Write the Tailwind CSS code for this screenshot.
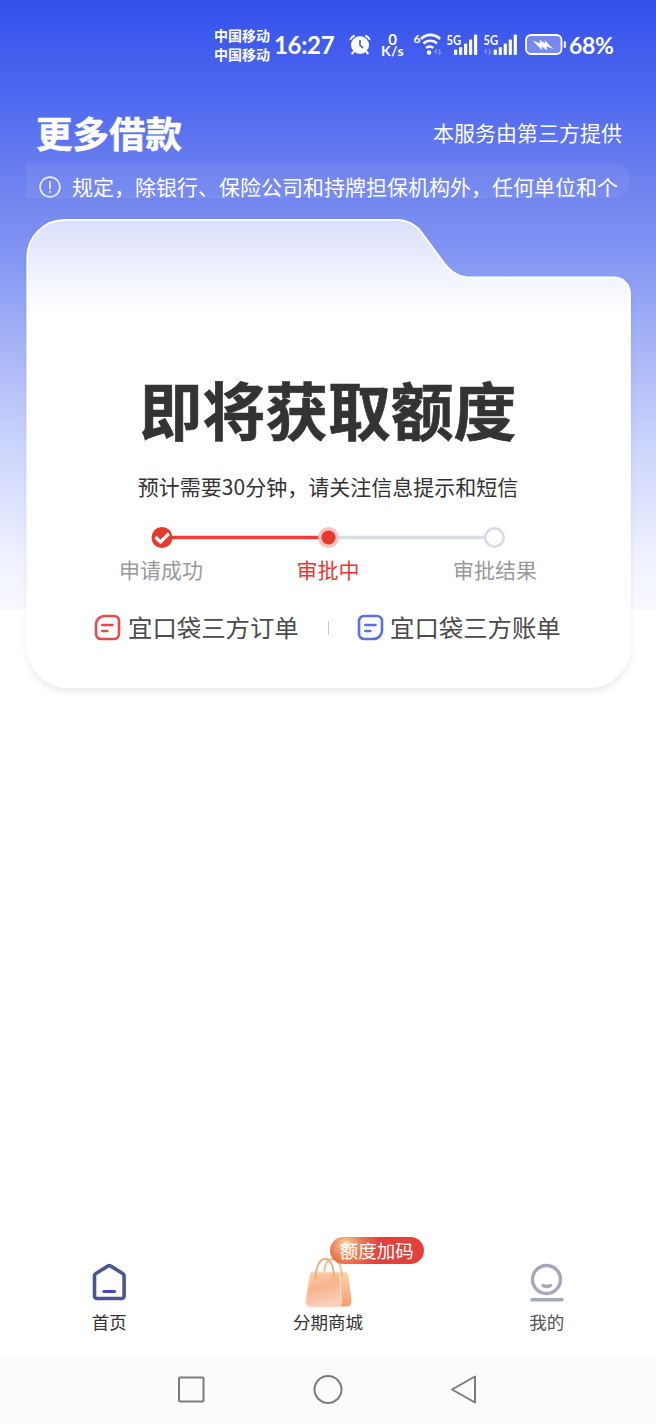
<!DOCTYPE html>
<html lang="zh-CN">
<head>
<meta charset="utf-8">
<title>更多借款</title>
<script src="https://cdn.jsdelivr.net/npm/@tailwindcss/browser@4"></script>
</head>
<body class="w-[656px] h-[1424px] overflow-hidden bg-white font-['Noto_Sans_CJK_SC',sans-serif]">
<div class="flex flex-col h-[1424px] w-[656px] bg-no-repeat bg-[size:656px_610px] bg-[linear-gradient(180deg,#3450eb_0%,#4f69ef_16%,#6b80ef_29%,#8496f2_42%,#a5b3f7_56%,#ced6fc_74%,#f0f2ff_92%,#f9faff_100%)]">

  <!-- Status bar -->
  <header class="flex h-[88px] items-start pl-[214px] pt-[26px] text-white">
    <div class="w-[56px] shrink-0 text-[14px] leading-[19px] font-bold whitespace-nowrap"><div>中国移动</div><div>中国移动</div></div>
    <div class="ml-[4px] w-[62px] shrink-0 font-['Lato'] text-[24px] leading-[38px] font-bold whitespace-nowrap tracking-[-0.3px]">16:27</div>
    <svg class="ml-[12px] mt-[7px] shrink-0" width="24" height="24" viewBox="0 0 24 24" fill="none" stroke="#fff">
      <circle cx="12" cy="12" r="9" fill="#fff" stroke="none"/>
      <path d="M2.600 6A8 8 0 0 1 6 2.800M21.400 6A8 8 0 0 0 18 2.800M5.600 18.800l-1.400 1.700M18.400 18.800l1.400 1.700" stroke-width="2" stroke-linecap="round"/>
      <path d="M12 7v5.200l3 3" stroke="#4963ee" stroke-width="1.800"/>
    </svg>
    <div class="ml-[7px] mt-[7px] w-[27px] shrink-0 text-center font-['Lato'] text-[14px] leading-[12px] font-bold"><div class="text-[15px] leading-[12px]">0</div><div class="tracking-[0.4px]">K/s</div></div>
    <svg class="ml-[7px] mt-[6px] shrink-0" width="30" height="26" viewBox="412 32 30 26" fill="none" stroke="#fff">
      <text x="412.5" y="42.5" font-family="Lato" font-size="12" font-weight="700" fill="#fff" stroke="none">6</text>
      <path d="M420 39a13 13 0 0 1 19 0M422.500 43.500a9.500 9.500 0 0 1 13.500 0M425.200 48a5 5 0 0 1 7 0" stroke-width="2.600"/>
      <circle cx="428" cy="52.500" r="2.300" fill="#fff" stroke="none"/>
      <path d="M435 54v-4l-1.500 1.500M438.500 49v5l1.500-1.500" stroke-width="1.300" opacity=".35"/>
    </svg>
    <svg class="ml-[3px] mt-[6px] shrink-0" width="75" height="26" viewBox="446 32 75 26" fill="#fff">
      <text x="446.500" y="44.500" font-family="Lato" font-size="13.500" font-weight="700" textLength="14.500" lengthAdjust="spacingAndGlyphs">5G</text>
      <text x="483.500" y="44.500" font-family="Lato" font-size="13.500" font-weight="700" textLength="14.500" lengthAdjust="spacingAndGlyphs">5G</text>
      <g id="bars"><rect x="454" y="49.500" width="3.200" height="5.500" rx="1"/><rect x="459" y="47" width="3.200" height="8" rx="1"/><rect x="464" y="43.500" width="3.200" height="11.500" rx="1"/><rect x="469" y="39.500" width="3.200" height="15.500" rx="1"/><rect x="474" y="34.500" width="3.200" height="20.500" rx="1"/></g>
      <use href="#bars" x="39.700"/>
      <path d="M486 54v-4l-1.500 1.500M489.500 49v5l1.500-1.500" fill="none" stroke="#fff" stroke-width="1.300" opacity=".35"/>
    </svg>
    <svg class="ml-[3px] mt-[6px] shrink-0" width="43" height="26" viewBox="524 32 43 26" fill="none">
      <rect x="526" y="35" width="35.500" height="19" rx="5" stroke="#fff" stroke-width="1.800" fill="#fff" fill-opacity=".28"/>
      <path d="M564.800 42v5" stroke="#fff" stroke-width="2" stroke-linecap="round"/>
      <path d="M532.500 40.500l7.500 3-.3-3.700 5.300 3.800-.2-3.500 4.700 5.200 4.500 3.800-7.500-2.500.3 3.700-5-3.700.2 3.400z" fill="#fff"/>
    </svg>
    <div class="ml-[2px] font-['Lato'] text-[23px] leading-[38px] font-bold whitespace-nowrap tracking-[-0.3px]">68%</div>
  </header>

  <!-- Page title -->
  <div class="flex h-[75px] items-center justify-between pl-[36px] pr-[34px] text-white">
    <h1 class="mt-[15px] text-[36.500px] leading-[40px] font-bold [-webkit-text-stroke:0.5px_#fff]">更多借款</h1>
    <p class="mt-[12px] text-[21px] leading-[30px]">本服务由第三方提供</p>
  </div>

  <!-- Notice -->
  <div class="mx-[26px] flex h-[35px] items-center rounded-r-[18px] bg-white/6 text-white">
    <svg class="ml-[12px] mt-[13px] shrink-0" width="24" height="24" viewBox="0 0 24 24" fill="none" stroke="#e8ecff" stroke-width="1.700"><circle cx="12" cy="12" r="9.900"/><path d="M12 6v8.300M12 15.800v2"/></svg>
    <p class="ml-[10px] mt-[10px] text-[21px] leading-[30px] whitespace-nowrap">规定，除银行、保险公司和持牌担保机构外，任何单位和个</p>
  </div>

  <!-- Folder card -->
  <section class="relative mt-[20px] h-[480px] flex flex-col items-center">
    <svg class="absolute left-0 top-0" width="656" height="490" viewBox="0 218 656 490">
      <defs>
        <linearGradient id="cardFill" gradientUnits="userSpaceOnUse" x1="0" y1="219" x2="0" y2="310"><stop offset="0" stop-color="#d8dffb"/><stop offset=".5" stop-color="#eceffd"/><stop offset="1" stop-color="#fff"/></linearGradient>
        <filter id="cardShadow" x="-5%" y="-5%" width="110%" height="112%"><feDropShadow dx="0" dy="5" stdDeviation="3" flood-color="#000" flood-opacity=".07"/></filter>
      </defs>
      <path filter="url(#cardShadow)" d="M27.300 257.500a37.500 37.500 0 0 1 37.500-37.500H396c12 0 20 5 26 13l22 30c8 10 15 14.500 28 14.500H614a16 16 0 0 1 16 16V645a42 42 0 0 1-42 42H69.300a42 42 0 0 1-42-42Z" fill="url(#cardFill)" stroke="#fff" stroke-width="1.800"/>
    </svg>
    <h2 class="relative mt-[155px] text-[62.800px] leading-[70px] font-bold text-[#333] [-webkit-text-stroke:0.6px_#333]">即将获取额度</h2>
    <p class="relative mt-[28px] text-[21px] leading-[30px] text-[#333]">预计需要30分钟，请关注信息提示和短信</p>

    <div class="relative mt-[24px] grid w-[501px] grid-cols-3 text-center text-[21px] leading-[30px] text-[#999]">
      <svg class="col-span-3 h-[26px] w-[501px]" viewBox="78 525 501 26" fill="none">
        <path d="M328 537.500H485" stroke="#d8dee6" stroke-width="3.500"/>
        <path d="M162 537.500H328" stroke="#e93f36" stroke-width="3.500"/>
        <circle cx="162" cy="537.500" r="10.500" fill="#e8392f"/>
        <path d="M155.500 537l5 5 8.500-8.500" stroke="#fff" stroke-width="3.200"/>
        <circle cx="328.500" cy="537.500" r="10.500" fill="#f7c3c0"/><circle cx="328.500" cy="537.500" r="7" fill="#e8392f"/>
        <circle cx="494.500" cy="537.500" r="9.200" fill="#fff" stroke="#d8dce6" stroke-width="2.700"/>
      </svg>
      <span class="mt-[3px]">申请成功</span><span class="mt-[3px] text-[#e8392f]">审批中</span><span class="mt-[3px]">审批结果</span>
    </div>

    <div class="relative mt-[26px] flex w-full items-center pl-[94px] text-[24.400px] leading-[36px] text-[#4a4a4a]">
      <svg class="shrink-0" width="27" height="27" viewBox="0 0 27 27" fill="none" stroke="#e64a4c" stroke-linecap="round" stroke-width="2.600"><path d="M10.500 2H20a5 5 0 0 1 5 5v13a5 5 0 0 1-5 5H7a5 5 0 0 1-5-5v-9.500A8.500 8.500 0 0 1 10.500 2Z"/><path d="M8.300 11h10.200M8.300 17h5"/></svg>
      <span class="ml-[7px] -mt-px w-[171px] whitespace-nowrap">宜口袋三方订单</span>
      <span class="ml-[29px] h-[14px] w-px bg-[#ccc]"></span>
      <svg class="ml-[28px] shrink-0" width="27" height="27" viewBox="0 0 27 27" fill="none" stroke="#5a70ea" stroke-linecap="round" stroke-width="2.600"><path d="M7 2h13a5 5 0 0 1 5 5v9.500a8.500 8.500 0 0 1-8.500 8.500H7a5 5 0 0 1-5-5V7a5 5 0 0 1 5-5Z"/><path d="M8.300 11h10.200M8.300 17h5"/></svg>
      <span class="ml-[6px] -mt-px whitespace-nowrap">宜口袋三方账单</span>
    </div>
  </section>

  <div class="grow"></div>

  <!-- Tab bar -->
  <nav class="grid h-[120px] grid-cols-3 text-center text-[17.500px] leading-[26px] text-[#333]">
    <div class="flex flex-col items-center pt-[26px]">
      <svg width="38" height="40" viewBox="90 1262 38 40" fill="none" stroke-linecap="round" stroke-linejoin="round"><path d="M94.500 1275.800q0-1.200 1-2l12.300-7.700q1.500-1 3 0l12.300 7.700q1 .8 1 2V1296a2.500 2.500 0 0 1-2.500 2.500H97a2.500 2.500 0 0 1-2.500-2.500Z" stroke="#4d5591" stroke-width="3.600"/><path d="M104 1291.500h10.500" stroke="#3b49d2" stroke-width="3.200"/></svg>
      <span class="mt-[7px]">首页</span>
    </div>
    <div class="relative flex flex-col items-center pt-[20px]">
      <svg width="56" height="54" viewBox="300 1256 56 54" fill="none">
        <defs>
          <linearGradient id="bagFront" x1="0" y1="0" x2=".3" y2="1"><stop offset="0" stop-color="#fbd2b4"/><stop offset=".5" stop-color="#f6b48c"/><stop offset="1" stop-color="#f9cdbb"/></linearGradient>
          <linearGradient id="bagBack" x1="0" y1="0" x2="0" y2="1"><stop offset="0" stop-color="#fcd7ad"/><stop offset="1" stop-color="#f59b6d"/></linearGradient>
        </defs>
        <path d="M329 1272h15.500q3.300 0 3.800 3.300l3.200 24.700q.5 6.500-5 6.500H327Z" fill="url(#bagBack)"/>
        <path d="M324 1277c0-11 3-18 8.500-18s9.500 7 9.500 18" stroke="#f5b98c" stroke-width="1.800"/>
        <path d="M313.500 1272h22.500q3.300 0 3.600 3.300l1.800 25.700q.2 6-5 6H311q-6 0-5.300-6l4-25.700q.6-3.300 3.800-3.300Z" fill="url(#bagFront)" stroke="#fce2d2"/>
        <path d="M315.500 1278c.5-11 4-19 9.500-19s9 7.500 9 18.500" stroke="#efab7c" stroke-width="1.900"/>
        <circle cx="315.500" cy="1278" r="2" fill="#fbb969"/><circle cx="333.500" cy="1278" r="2" fill="#fbb969"/>
      </svg>
      <span class="-mt-[1px]">分期商城</span>
      <span class="absolute left-[111px] top-[1px] h-[27px] w-[94px] rounded-full bg-[radial-gradient(circle_at_16px_8px,#fff0c9_0px,#f3b184_6px,#e9784e_16px,#e3403c_34px)] text-[18.500px] leading-[26px] text-white">额度加码</span>
    </div>
    <div class="flex flex-col items-center pt-[26px] text-[#555]">
      <svg width="38" height="40" viewBox="528 1262 38 40" fill="none" stroke="#a5a8b9" stroke-linecap="round"><circle cx="546.500" cy="1279.500" r="14" stroke-width="3.400"/><path d="M543 1285.500q3.800 2 7.500 0" stroke-width="3.400"/><path d="M532 1299.700h30" stroke-width="3.400"/></svg>
      <span class="mt-[7px]">我的</span>
    </div>
  </nav>

  <!-- System navigation -->
  <footer class="flex h-[68px] items-center bg-[#fbfbfb]">
    <svg class="w-full h-[68px]" viewBox="0 1356 656 68" fill="none" stroke="#7b7b7b" stroke-width="2" stroke-linejoin="round"><rect x="179" y="1377.500" width="24.500" height="24" rx="1"/><circle cx="328" cy="1389.500" r="13.500"/><path d="M475 1376.500v26L452 1389.500Z"/></svg>
  </footer>
</div>
</body>
</html>
